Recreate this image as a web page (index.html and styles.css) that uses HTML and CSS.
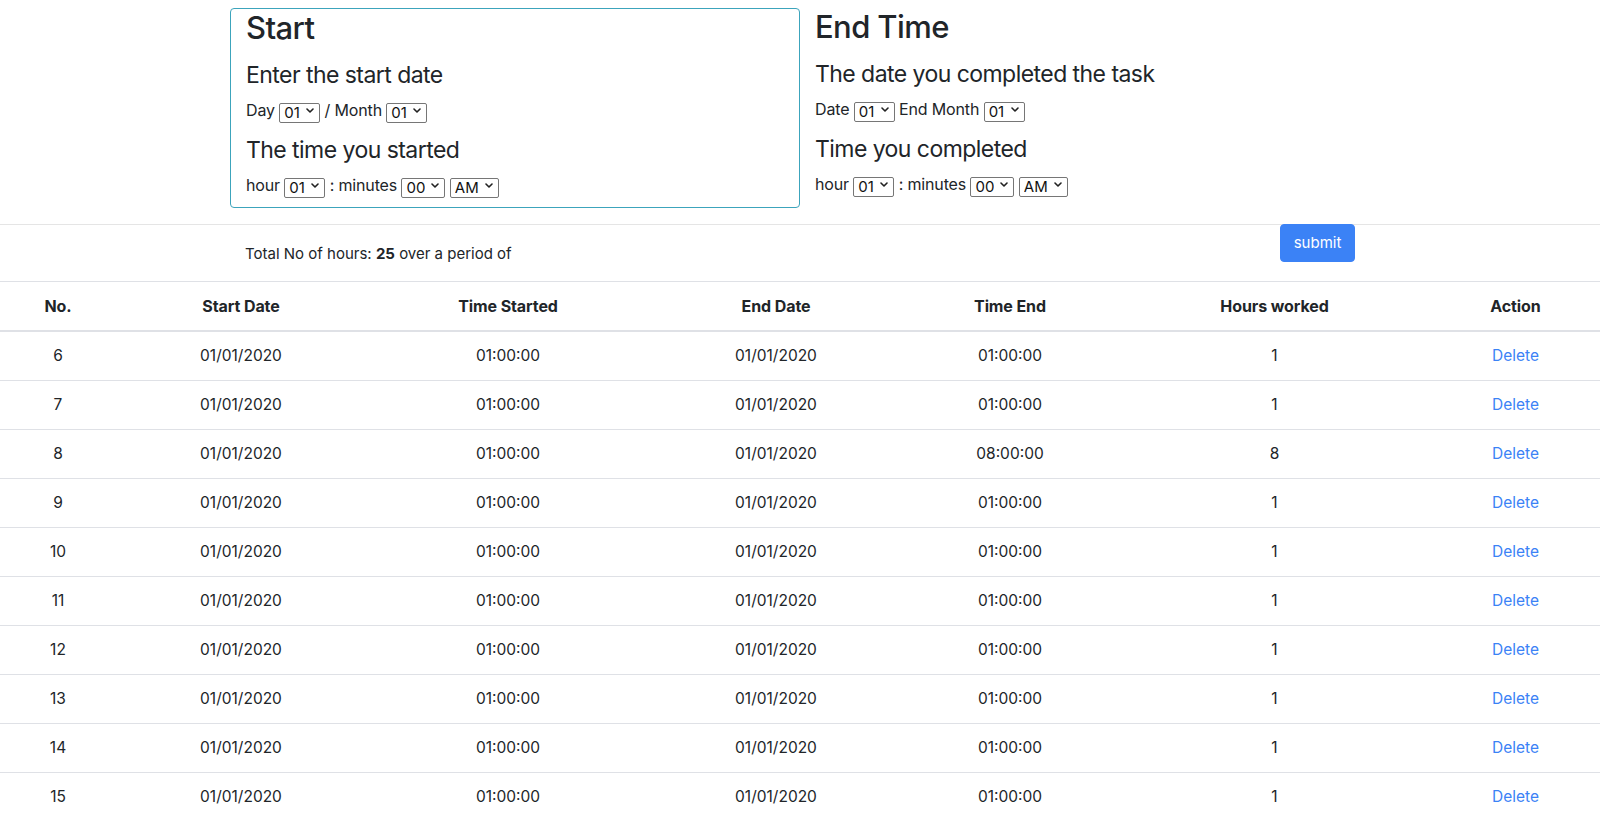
FILE: index.html
```html
<!DOCTYPE html>
<html lang="en">
<head>
<meta charset="utf-8">
<title>Hours tracker</title>
<link rel="stylesheet" href="styles.css">
</head>
<body>
<div class="container">
  <div class="row">
    <div class="col col-start">
      <h2>Start</h2>
      <h4>Enter the start date</h4>
      <div class="field">Day <span class="sel"><select><option>01</option></select><svg viewBox="0 0 8 5" width="8" height="5"><polyline points="1,1 4,4 7,1"/></svg></span> / Month <span class="sel"><select><option>01</option></select><svg viewBox="0 0 8 5" width="8" height="5"><polyline points="1,1 4,4 7,1"/></svg></span></div>
      <h4>The time you started</h4>
      <div class="field">hour <span class="sel"><select><option>01</option></select><svg viewBox="0 0 8 5" width="8" height="5"><polyline points="1,1 4,4 7,1"/></svg></span> : minutes <span class="sel"><select><option>00</option></select><svg viewBox="0 0 8 5" width="8" height="5"><polyline points="1,1 4,4 7,1"/></svg></span> <span class="sel"><select><option>AM</option></select><svg viewBox="0 0 8 5" width="8" height="5"><polyline points="1,1 4,4 7,1"/></svg></span></div>
    </div>
    <div class="col col-end">
      <h2>End Time</h2>
      <h4>The date you completed the task</h4>
      <div class="field">Date <span class="sel"><select><option>01</option></select><svg viewBox="0 0 8 5" width="8" height="5"><polyline points="1,1 4,4 7,1"/></svg></span> End Month <span class="sel"><select><option>01</option></select><svg viewBox="0 0 8 5" width="8" height="5"><polyline points="1,1 4,4 7,1"/></svg></span></div>
      <h4>Time you completed</h4>
      <div class="field">hour <span class="sel"><select><option>01</option></select><svg viewBox="0 0 8 5" width="8" height="5"><polyline points="1,1 4,4 7,1"/></svg></span> : minutes <span class="sel"><select><option>00</option></select><svg viewBox="0 0 8 5" width="8" height="5"><polyline points="1,1 4,4 7,1"/></svg></span> <span class="sel"><select><option>AM</option></select><svg viewBox="0 0 8 5" width="8" height="5"><polyline points="1,1 4,4 7,1"/></svg></span></div>
    </div>
  </div>
</div>
<hr class="divider">
<div class="container summary">
  <p class="total">Total No of hours: <b>25</b> over a period of</p>
  <button class="btn-submit" type="button">submit</button>
</div>
<table class="records">
  <thead>
    <tr>
      <th class="c1">No.</th>
      <th class="c2">Start Date</th>
      <th class="c3">Time Started</th>
      <th class="c4">End Date</th>
      <th class="c5">Time End</th>
      <th class="c6">Hours worked</th>
      <th class="c7">Action</th>
    </tr>
  </thead>
  <tbody>
    <tr><td>6</td><td>01/01/2020</td><td>01:00:00</td><td>01/01/2020</td><td>01:00:00</td><td>1</td><td><a href="#">Delete</a></td></tr>
    <tr><td>7</td><td>01/01/2020</td><td>01:00:00</td><td>01/01/2020</td><td>01:00:00</td><td>1</td><td><a href="#">Delete</a></td></tr>
    <tr><td>8</td><td>01/01/2020</td><td>01:00:00</td><td>01/01/2020</td><td>08:00:00</td><td>8</td><td><a href="#">Delete</a></td></tr>
    <tr><td>9</td><td>01/01/2020</td><td>01:00:00</td><td>01/01/2020</td><td>01:00:00</td><td>1</td><td><a href="#">Delete</a></td></tr>
    <tr><td>10</td><td>01/01/2020</td><td>01:00:00</td><td>01/01/2020</td><td>01:00:00</td><td>1</td><td><a href="#">Delete</a></td></tr>
    <tr><td>11</td><td>01/01/2020</td><td>01:00:00</td><td>01/01/2020</td><td>01:00:00</td><td>1</td><td><a href="#">Delete</a></td></tr>
    <tr><td>12</td><td>01/01/2020</td><td>01:00:00</td><td>01/01/2020</td><td>01:00:00</td><td>1</td><td><a href="#">Delete</a></td></tr>
    <tr><td>13</td><td>01/01/2020</td><td>01:00:00</td><td>01/01/2020</td><td>01:00:00</td><td>1</td><td><a href="#">Delete</a></td></tr>
    <tr><td>14</td><td>01/01/2020</td><td>01:00:00</td><td>01/01/2020</td><td>01:00:00</td><td>1</td><td><a href="#">Delete</a></td></tr>
    <tr><td>15</td><td>01/01/2020</td><td>01:00:00</td><td>01/01/2020</td><td>01:00:00</td><td>1</td><td><a href="#">Delete</a></td></tr>
  </tbody>
</table>
</body>
</html>
```

FILE: styles.css
```css
* { box-sizing: border-box; }
html, body { margin: 0; padding: 0; }
body {
  font-family: Inter, "Noto Sans", sans-serif;
  font-size: 16px;
  line-height: 24px;
  color: #212529;
  background: #fff;
}
.container {
  width: 1140px;
  margin: 0 auto;
}
.row {
  display: flex;
  align-items: flex-start;
  margin-top: 8px;
}
.col {
  width: 571px;
  padding: 0 15px;
}
.col-start {
  border: 1px solid #3ca4bc;
  border-radius: 4px;
  height: 200px;
}
h2 {
  font-size: 31px;
  font-weight: 500;
  line-height: 38px;
  letter-spacing: -0.6px;
  margin: 0 0 14px;
}
h4 {
  font-size: 23px;
  font-weight: 400;
  line-height: 29px;
  letter-spacing: -0.55px;
  margin: 0 0 8px;
}
.field {
  font-size: 16px;
  letter-spacing: -0.15px;
  line-height: 24px;
  height: 24px;
  margin-bottom: 14px;
  white-space: nowrap;
}
.field:last-child { margin-bottom: 0; }
.sel {
  position: relative;
  display: inline-block;
  vertical-align: middle;
  height: 20px;
  margin-top: -3px;
  letter-spacing: 0;
}
.sel select {
  appearance: none;
  -webkit-appearance: none;
  font-family: Inter, "Noto Sans", sans-serif;
  font-size: 15px;
  color: #111;
  background: #fff;
  border: 1px solid #767676;
  border-radius: 2px;
  height: 20px;
  line-height: 18px;
  padding: 0 19px 0 4px;
  margin: 0;
}
.sel svg {
  position: absolute;
  right: 6px;
  top: 8px;
  pointer-events: none;
}
.sel svg polyline {
  fill: none;
  stroke: #222;
  stroke-width: 1.6;
  stroke-linecap: round;
  stroke-linejoin: round;
}
.divider {
  border: 0;
  border-top: 1px solid #e5e5e5;
  margin: 16px 0 0;
  height: 0;
}
.summary {
  display: flex;
  justify-content: space-between;
  align-items: flex-start;
  padding: 0 15px;
}
.total {
  margin: 17px 0 15px;
  font-size: 15px;
  line-height: 24px;
}
.total b { font-weight: 700; }
.btn-submit {
  font-family: Inter, "Noto Sans", sans-serif;
  font-size: 15px;
  line-height: 24px;
  color: #fff;
  background: #3b82f6;
  border: 1px solid #3b82f6;
  border-radius: 4px;
  padding: 6px 12px;
  margin-top: -1px;
  width: 75px;
}
.records {
  width: 100%;
  border-collapse: collapse;
  table-layout: fixed;
  font-size: 16px;
}
.records th, .records td {
  padding: 12px;
  line-height: 24px;
  text-align: center;
  border-top: 1px solid #dfe1e6;
}
.records td {
  font-size: 15.5px;
}
.records th {
  font-weight: 700;
  letter-spacing: -0.1px;
  border-bottom: 2px solid #dfe1e6;
}
.records a {
  color: #3b82f6;
  text-decoration: none;
}
.c1 { width: 116px; }
.c2 { width: 250px; }
.c3 { width: 284px; }
.c4 { width: 252px; }
.c5 { width: 216px; }
.c6 { width: 313px; }
.c7 { width: 169px; }
```
